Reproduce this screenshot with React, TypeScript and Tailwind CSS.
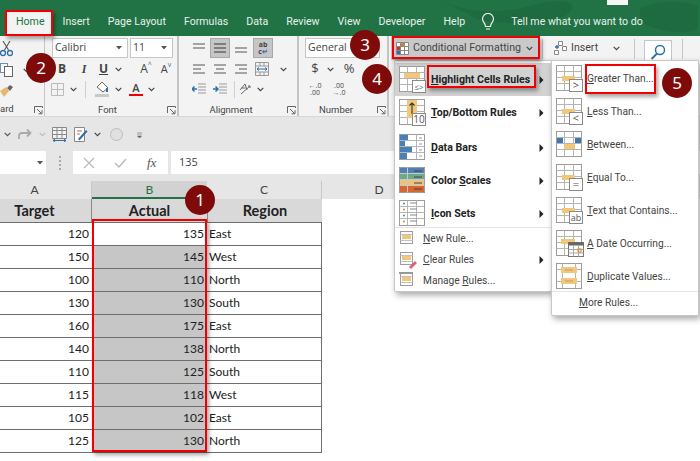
import React from "react";

const Caret = ({ c = "#444" }: { c?: string }) => (
  <svg width="7" height="5" viewBox="0 0 7 5"><path d="M0.7 0.8 3.5 3.6 6.3 0.8" fill="none" stroke={c} strokeWidth="1.2" /></svg>
);
const DropTri = () => <svg width="6" height="4" viewBox="0 0 6 4"><path d="M0 0h6L3 3.5z" fill="#555" /></svg>;
const RightTri = () => <svg width="5" height="8" viewBox="0 0 5 8"><path d="M0.5 0 4.5 4 0.5 8z" fill="#222" /></svg>;
const Launcher = () => (
  <svg width="9" height="9" viewBox="0 0 9 9"><path d="M0.5 7V0.5H8.5V2M3 3 7.5 7.5M4.5 7.8H8V4.2" fill="none" stroke="#666" strokeWidth="1" /></svg>
);
const Lines = ({ a, b, c, d = "#8a8a8a" }: { a: number[]; b: number[]; c: number[]; d?: string }) => (
  <svg width="14" height="10" viewBox="0 0 14 10">
    <path d={`M${a[0]} 1H${a[1]}M${b[0]} 5H${b[1]}M${c[0]} 9H${c[1]}`} stroke={d} strokeWidth="1.3" />
  </svg>
);
const Cell = ({ w, children, cls = "" }: { w: string; children?: React.ReactNode; cls?: string }) => (
  <div className={`flex items-center justify-center h-[20px] ${w} ${cls}`}>{children}</div>
);

function Base({ children, lines = true }: { children?: React.ReactNode; lines?: boolean }) {
  return (
    <svg width="28" height="27" viewBox="0 0 28 27" className="shrink-0">
      <rect x="0.5" y="0.5" width="25" height="25" fill="#fff" stroke="#9c9c9c" />
      {lines && <path d="M8.5 0.5V25.5M17.5 0.5V25.5M0.5 6.5H25.5M0.5 12.5H25.5M0.5 18.5H25.5" stroke="#b5b5b5" />}
      {children}
    </svg>
  );
}
const Badge = ({ t, size = 10 }: { t: string; size?: number }) => (
  <g>
    <rect x="13.5" y="14.5" width="13" height="12" fill="#fff" stroke="#8a8a8a" />
    <text x="20" y="24" fontSize={size} textAnchor="middle" fill="#555" fontFamily="Open Sans">{t}</text>
  </g>
);
const Amber = ({ y = 9, x = 6, w = 14 }: { y?: number; x?: number; w?: number }) => <rect x={x} y={y} width={w} height="5" fill="#f2c878" />;

const IconHighlight = () => <Base><rect x="1" y="7" width="24" height="5" fill="#fff" /><Amber y={7} x={5} w={16} /><Badge t="≤>" size={8} /></Base>;
const IconTop = () => (
  <Base>
    <rect x="8" y="1" width="10" height="18" fill="#f2c878" />
    <path d="M13 15V4M10.5 6.5 13 4l2.5 2.5" fill="none" stroke="#333" strokeWidth="1.1" />
    <Badge t="10" />
  </Base>
);
const IconBars = () => (
  <Base lines={false}>
    <path d="M17.5 0.5V25.5M0.5 6.5H25.5M0.5 12.5H25.5M0.5 18.5H25.5" stroke="#b5b5b5" />
    <path d="M1 1h8v5H1zM1 7h5v5H1zM1 13h12v5H1zM1 19h7v6H1z" fill="#4a7fb8" />
    <path d="M20 4h3M20 10h3M20 16h3M20 22h3" stroke="#999" />
  </Base>
);
const IconScales = () => (
  <Base lines={false}>
    <rect x="1" y="1" width="24" height="6" fill="#4f81b5" />
    <rect x="1" y="7" width="24" height="6" fill="#6fa98c" />
    <rect x="1" y="13" width="24" height="6" fill="#eec27a" />
    <rect x="1" y="19" width="24" height="6" fill="#d9662f" />
    <path d="M8.5 0.5V25.5M0.5 6.5H25.5M0.5 12.5H25.5M0.5 18.5H25.5" stroke="#c8c8c8" />
    <path d="M15 4h8M15 10h8M15 16h8M15 22h8" stroke="#444" />
  </Base>
);
const IconSets = () => (
  <Base>
    <path d="M11 3h7M11 9h7M11 15h7M11 21h7" stroke="#888" />
    <circle cx="5" cy="3.5" r="1" fill="#3a9a7a" /><circle cx="5" cy="9.5" r="1" fill="#e08020" />
    <circle cx="5" cy="15.5" r="1" fill="#3a9a7a" /><circle cx="5" cy="21.5" r="1" fill="#e08020" />
  </Base>
);
const SmallBase = ({ children }: { children?: React.ReactNode }) => (
  <svg width="18" height="18" viewBox="0 0 18 18" className="shrink-0">
    <rect x="1.5" y="1.5" width="12" height="12" fill="#fff" stroke="#9c9c9c" />
    <path d="M1.5 4.5H13.5M1.5 10.5H13.5" stroke="#c0c0c0" />
    <rect x="3" y="5" width="9" height="4" fill="#f2c878" />
    {children}
  </svg>
);
const Sub = ({ kind }: { kind: string }) => {
  if (kind === "between") return (
    <Base lines={false}>
      <path d="M8.5 0.5V25.5M17.5 0.5V25.5M0.5 6.5H25.5M0.5 12.5H25.5M0.5 18.5H25.5" stroke="#b5b5b5" />
      <rect x="1" y="7" width="6" height="5" fill="#3f79b0" /><rect x="19" y="7" width="6" height="5" fill="#3f79b0" />
      <Amber y={13} x={8} w={11} />
    </Base>
  );
  if (kind === "dup") return (
    <Base lines={false}>
      <path d="M0.5 6.5H25.5M0.5 18.5H25.5M6.5 0.5V25.5M19.5 0.5V25.5" stroke="#b5b5b5" />
      <rect x="5" y="4" width="16" height="6" fill="#f2c878" /><rect x="5" y="15" width="16" height="6" fill="#f2c878" />
      <path d="M9 7h8M9 18h8" stroke="#b98" />
    </Base>
  );
  if (kind === "date") return (
    <Base>
      <Amber y={9} x={5} w={14} />
      <rect x="12.5" y="12.5" width="15" height="14" fill="#fff" stroke="#777" />
      <rect x="12.5" y="12.5" width="15" height="3" fill="#666" />
      <path d="M17.5 15.5V26.5M22.5 15.5V26.5M12.5 19.5H27.5M12.5 23H27.5" stroke="#aaa" />
      <rect x="22" y="19" width="3" height="3" fill="none" stroke="#e08020" />
    </Base>
  );
  const t = kind === "gt" ? ">" : kind === "lt" ? "<" : kind === "eq" ? "=" : "ab";
  return <Base><Amber y={11} x={6} w={13} /><Badge t={t} size={kind === "ab" ? 9 : 11} /></Base>;
};

const Item = ({ icon, children, tri, h = "h-[33px]", cls = "" }: { icon: React.ReactNode; children: React.ReactNode; tri?: boolean; h?: string; cls?: string }) => (
  <div className={`flex items-center pl-[4px] ${h} ${cls}`}>
    <div className="w-[32px] flex shrink-0">{icon}</div>
    <span className="text-[10.6px] font-bold text-[#222] whitespace-nowrap font-['Roboto',sans-serif]">{children}</span>
    {tri && <span className="ml-auto mr-[7px] flex"><RightTri /></span>}
  </div>
);
const Small = ({ icon, children, tri }: { icon: React.ReactNode; children: React.ReactNode; tri?: boolean }) => (
  <div className="flex items-center h-[21px] pl-[4px]">
    <div className="w-[24px] flex shrink-0">{icon}</div>
    <span className="text-[10.2px] text-[#444] whitespace-nowrap font-['Roboto',sans-serif]">{children}</span>
    {tri && <span className="ml-auto mr-[7px] flex"><RightTri /></span>}
  </div>
);
const SubItem = ({ kind, children }: { kind: string; children: React.ReactNode }) => (
  <div className="flex items-center h-[33px] pl-[4px]">
    <div className="w-[31px] flex shrink-0"><Sub kind={kind} /></div>
    <span className="text-[10.2px] text-[#444] whitespace-nowrap font-['Roboto',sans-serif]">{children}</span>
  </div>
);
const Dot = ({ cls, t }: { cls: string; t: string }) => (
  <div className={`absolute w-[30px] h-[30px] rounded-full bg-[#7f0a0a] text-white flex items-center justify-center text-[17px] font-['Noto_Sans',sans-serif] ${cls}`}>{t}</div>
);
const RedBox = ({ cls }: { cls: string }) => (
  <div className={`absolute border-[2px] border-[#f00000] shadow-[2px_3px_4px_rgba(0,0,0,0.35)] ${cls}`} />
);

const rows: [number, number, string][] = [
  [120, 135, "East"], [150, 145, "West"], [100, 110, "North"], [130, 130, "South"], [160, 175, "East"],
  [140, 138, "North"], [110, 125, "South"], [115, 118, "West"], [105, 102, "East"], [125, 130, "North"],
];
const tabs = ["Insert", "Page Layout", "Formulas", "Data", "Review", "View", "Developer", "Help"];

export default function App() {
  return (
    <div className="relative w-[700px] h-[461px] overflow-hidden bg-white font-['Open_Sans',sans-serif] text-[#444]">
      {/* title + tabs */}
      <div className="relative h-[36px] bg-[#217346] overflow-hidden">
        <svg className="absolute left-0 top-0" width="700" height="36" viewBox="0 0 700 36">
          <path d="M440 0c30 14 60 14 90 6s50-6 40 6-60 14-90 8M640 8c20-8 40-8 58-2v24c-20 6-44 0-58-8z" fill="#1e6b41" />
          <rect x="607" y="0" width="21" height="5" fill="#f5f5f5" />
        </svg>
        <div className="absolute left-[6px] top-[10px] w-[47px] h-[26px] bg-[#f3f3f3]" />
        <div className="relative flex items-center h-[28px] mt-[8px] pl-[16px] gap-[18px] text-[10.6px] text-[#e8f1ec] whitespace-nowrap font-['Roboto',sans-serif]">
          <span className="text-[#217346]">Home</span>
          {tabs.map((t) => <span key={t}>{t}</span>)}
          <span className="ml-[-2px] flex items-center gap-[16px]">
            <svg width="14" height="18" viewBox="0 0 14 18"><path d="M4.5 13.5C4.5 10 1.5 9 1.5 6a5.5 5.5 0 0 1 11 0c0 3-3 4-3 7.500zM5 16h4" fill="none" stroke="#eef5f0" strokeWidth="1.2" /></svg>
            <span>Tell me what you want to do</span>
          </span>
        </div>
      </div>

      {/* ribbon */}
      <div className="flex h-[81px] bg-[#f3f3f3] border-b border-[#d8d8d8] text-[#444]">
        {/* clipboard */}
        <div className="relative w-[45px] shrink-0 border-r border-[#c4c4c4] flex flex-col pt-[3px]">
          <div className="flex flex-col gap-[1px]">
            <Cell w="w-[13px]">
              <svg width="13" height="16" viewBox="0 0 13 16"><path d="M3 0 8.500 9M10 0 4.500 9" stroke="#555" strokeWidth="1.1" /><circle cx="3" cy="12" r="2.500" fill="none" stroke="#2f6ea8" strokeWidth="1.3" /><circle cx="10" cy="12" r="2.500" fill="none" stroke="#2f6ea8" strokeWidth="1.3" /></svg>
            </Cell>
            <div className="flex items-center">
              <Cell w="w-[13px]">
                <svg width="13" height="14" viewBox="0 0 13 14"><rect x="0.500" y="0.500" width="7" height="9" fill="#fff" stroke="#6a8fb5" /><rect x="4.500" y="3.500" width="8" height="10" fill="#fff" stroke="#666" /></svg>
              </Cell>
              <Cell w="w-[7px]" cls="ml-[10px]"><Caret /></Cell>
            </div>
            <Cell w="w-[13px]">
              <svg width="13" height="12" viewBox="0 0 13 12"><path d="M0 6 6 2l3 4-5 6z" fill="#e9b66e" /><path d="M7 3l3-3 3 2-3 4z" fill="#666" /></svg>
            </Cell>
          </div>
          <div className="absolute left-0 top-[66px] text-[9.5px] font-['Roboto',sans-serif] text-[#444]">ard</div>
          <div className="absolute left-[34px] top-[70px]"><Launcher /></div>
        </div>
        {/* font */}
        <div className="relative w-[134px] shrink-0 border-r-[2px] border-[#c4c4c4] pl-[7px] pt-[2px] flex flex-col">
          <div className="flex gap-[2px]">
            <div className="w-[76px] h-[20px] border border-[#c6c6c6] bg-white flex items-center justify-between pl-[2px] pr-[5px] text-[10.5px]"><span>Calibri</span><DropTri /></div>
            <div className="w-[43px] h-[20px] border border-[#c6c6c6] bg-white flex items-center justify-between pl-[2px] pr-[5px] text-[10.5px]"><span>11</span><DropTri /></div>
          </div>
          <div className="flex items-center mt-[1px] h-[20px] text-[12px] text-[#444] pl-[3px]">
            <Cell w="w-[14px]"><b className="font-bold">B</b></Cell>
            <Cell w="w-[8px]" />
            <Cell w="w-[14px]"><i className="font-['Liberation_Serif',serif] font-bold">I</i></Cell>
            <Cell w="w-[6px]" />
            <Cell w="w-[13px]"><b className="underline">U</b></Cell>
            <Cell w="w-[16px]"><Caret /></Cell>
            <Cell w="w-[13px]" />
            <Cell w="w-[14px]"><span className="text-[12px]">A</span><span className="text-[#2f6ea8] text-[7px] mb-[8px]">^</span></Cell>
            <Cell w="w-[6px]" />
            <Cell w="w-[14px]"><span className="text-[11px]">A</span><span className="text-[#2f6ea8] text-[7px] mb-[8px]">v</span></Cell>
          </div>
          <div className="flex items-center h-[20px]">
            <Cell w="w-[13px]" cls="ml-[-1px]">
              <svg width="13" height="13" viewBox="0 0 13 13"><path d="M0.500 0.500H12.500V12.500H0.500zM6.500 0.500V12.500M0.500 6.500H12.500" fill="none" stroke="#bbb" /></svg>
            </Cell>
            <Cell w="w-[19px]"><Caret /></Cell>
            <div className="w-px h-[17px] bg-[#d0d0d0] ml-[2px]" />
            <Cell w="w-[20px]" cls="ml-[6px]">
              <svg width="14" height="16" viewBox="0 0 14 16"><path d="M7 1 13 7l-5 4-6-5z" fill="#fff" stroke="#666" /><path d="M12 7v4" stroke="#2f6ea8" strokeWidth="2" /><rect x="0" y="13" width="14" height="3" fill="#c8c8c8" /></svg>
            </Cell>
            <Cell w="w-[9px]" cls="ml-[2px]"><Caret /></Cell>
            <Cell w="w-[12px]" cls="ml-[7px] flex-col">
              <span className="text-[11px] leading-[12px] font-semibold">A</span>
              <span className="w-[14px] h-[2px] bg-[#f00000] shrink-0" />
            </Cell>
            <Cell w="w-[9px]" cls="ml-[5px]"><Caret /></Cell>
          </div>
          <div className="absolute left-0 right-0 top-[67px] text-center text-[9.5px] pr-[14px] pl-[7px] font-['Roboto',sans-serif]">Font</div>
          <div className="absolute right-[1px] top-[70px]"><Launcher /></div>
        </div>
        {/* alignment */}
        <div className="relative w-[120px] shrink-0 border-r-[2px] border-[#c4c4c4] pl-[10px] pt-[2px] flex flex-col">
          <div className="flex items-center h-[20px] gap-[1px]">
            <Cell w="w-[20px]"><Lines a={[1, 13]} b={[1, 13]} c={[20, 20]} /></Cell>
            <Cell w="w-[20px]" cls="bg-[#c6c6c6] border border-[#a8a8a8]"><Lines a={[1, 13]} b={[1, 13]} c={[1, 13]} d="#666" /></Cell>
            <Cell w="w-[20px]"><Lines a={[20, 20]} b={[1, 13]} c={[1, 13]} /></Cell>
            <Cell w="w-[20px]" cls="ml-[1px] bg-[#c6c6c6] border border-[#a8a8a8] text-[7px] leading-[7px] font-bold flex-col"><span>ab</span><span>c<span className="text-[#2f6ea8]">↵</span></span></Cell>
          </div>
          <div className="flex items-center h-[20px] gap-[1px] mt-[1px]">
            <Cell w="w-[20px]"><Lines a={[1, 13]} b={[1, 9]} c={[1, 13]} /></Cell>
            <Cell w="w-[20px]"><Lines a={[1, 13]} b={[3, 11]} c={[1, 13]} /></Cell>
            <Cell w="w-[20px]"><Lines a={[1, 13]} b={[5, 13]} c={[1, 13]} /></Cell>
            <Cell w="w-[20px]">
              <svg width="14" height="14" viewBox="0 0 14 14"><path d="M0.500 0.500H13.500V13.500H0.500zM0.500 4H13.500M0.500 10H13.500M5 0.500V4M9 0.500V4M5 10V13.500M9 10V13.500" fill="none" stroke="#999" /><path d="M2 7H12M4 5.500 2 7l2 1.500M10 5.500 12 7l-2 1.500" fill="none" stroke="#2f6ea8" /></svg>
            </Cell>
            <Cell w="w-[20px]"><Caret /></Cell>
          </div>
          <div className="flex items-center h-[20px] gap-[1px]">
            <Cell w="w-[20px]">
              <svg width="14" height="12" viewBox="0 0 14 12"><path d="M6 1H14M6 4H14M6 7H14M6 10H14" stroke="#999" /><path d="M5 6H0M2.500 3.500 0 6l2.500 2.500" fill="none" stroke="#2f6ea8" strokeWidth="1.500" /></svg>
            </Cell>
            <Cell w="w-[20px]">
              <svg width="14" height="12" viewBox="0 0 14 12"><path d="M6 1H14M6 4H14M6 7H14M6 10H14" stroke="#999" /><path d="M0 6H5M2.500 3.500 5 6 2.500 8.500" fill="none" stroke="#2f6ea8" strokeWidth="1.500" /></svg>
            </Cell>
            <div className="w-px h-[17px] bg-[#d0d0d0] ml-[3px]" />
            <Cell w="w-[16px]" cls="ml-[1px]">
              <svg width="14" height="14" viewBox="0 0 14 14"><path d="M2 8 7 2l2 6M3.500 6l4 0M3 12l9-8M10 4h2v2" fill="none" stroke="#666" /></svg>
            </Cell>
            <Cell w="w-[12px]"><Caret /></Cell>
          </div>
          <div className="absolute left-0 right-[14px] top-[67px] text-center text-[9.5px] font-['Roboto',sans-serif]">Alignment</div>
          <div className="absolute right-[1px] top-[70px]"><Launcher /></div>
        </div>
        {/* number */}
        <div className="relative w-[90px] shrink-0 border-r-[2px] border-[#c4c4c4] pl-[6px] pt-[2px] flex flex-col">
          <div className="w-[75px] h-[20px] border border-[#c6c6c6] bg-white flex items-center pl-[2px] text-[10.5px]">General</div>
          <div className="flex items-center h-[20px] mt-[1px] pl-[2px] text-[#444]">
            <Cell w="w-[16px]"><span className="text-[13px]">$</span></Cell>
            <Cell w="w-[15px]"><Caret /></Cell>
            <Cell w="w-[22px]"><span className="text-[13px]">%</span></Cell>
          </div>
          <div className="flex items-center h-[20px] pl-[3px] text-[7px] leading-[7px] gap-[10px]">
            <Cell w="w-[14px]" cls="flex-col"><span><span className="text-[#2f6ea8]">←</span>.0</span><span>.00</span></Cell>
            <Cell w="w-[14px]" cls="flex-col"><span>.00</span><span><span className="text-[#2f6ea8]">→</span>.0</span></Cell>
          </div>
          <div className="absolute left-0 right-[14px] top-[67px] text-center text-[9.5px] font-['Roboto',sans-serif]">Number</div>
          <div className="absolute right-[1px] top-[70px]"><Launcher /></div>
        </div>
        {/* styles / cells / editing */}
        <div className="w-[2px] shrink-0" />
        <div className="w-[148px] shrink-0 h-[24px] bg-[#c9c9c9] flex items-center pl-[5px] text-[10.6px] whitespace-nowrap gap-[3px] font-['Roboto',sans-serif]">
          <svg width="13" height="13" viewBox="0 0 13 13" className="shrink-0"><path d="M0.500 0.500H12.500V12.500H0.500zM4.500 0.500V12.500M8.500 0.500V12.500M0.500 4.500H12.500M0.500 8.500H12.500" fill="#fff" stroke="#888" /><rect x="5" y="1" width="3" height="3" fill="#e08020" /><rect x="1" y="5" width="3" height="3" fill="#d03030" /><rect x="1" y="9" width="3" height="3" fill="#2f6ea8" /></svg>
          <span className="ml-[1px]">Conditional Formatting</span>
          <span className="ml-[2px] flex"><Caret /></span>
        </div>
        <div className="w-px h-[20px] mt-[3px] ml-[3px] bg-[#c4c4c4] shrink-0" />
        <div className="flex items-center h-[24px] pl-[11px] text-[10.6px] w-[91px] shrink-0 font-['Roboto',sans-serif]">
          <svg width="13" height="14" viewBox="0 0 13 14" className="shrink-0"><path d="M4.500 0.500H8.500V4.500H4.500zM8.500 5.500H12.500V9.500H8.500zM0.500 9.500H4.500V13.500H0.500z" fill="#fff" stroke="#888" /><path d="M1 6H5M3 4V8" stroke="#2f6ea8" strokeWidth="1.300" /></svg>
          <span className="ml-[4px]">Insert</span>
          <span className="ml-[15px] flex"><Caret /></span>
        </div>
        <div className="w-px h-[20px] mt-[3px] bg-[#c4c4c4] shrink-0" />
        <div className="w-[28px] h-[22px] mt-[4px] ml-[9px] border border-[#c6c6c6] border-b-0 bg-white flex items-center justify-center shrink-0">
          <svg width="16" height="16" viewBox="0 0 16 16"><circle cx="10" cy="6" r="4.500" fill="none" stroke="#2f6ea8" strokeWidth="1.500" /><path d="M7 9.500 1.500 15" stroke="#2f6ea8" strokeWidth="1.800" /></svg>
        </div>
        <div className="w-px h-[20px] mt-[3px] ml-[10px] bg-[#c4c4c4] shrink-0" />
      </div>

      {/* qat + formula */}
      <div className="h-[64px] bg-[#e6e6e6] flex flex-col">
        <div className="flex items-center h-[35px] text-[#777]">
          <Cell w="w-[14px]"><Caret c="#555" /></Cell>
          <Cell w="w-[16px]" cls="ml-[3px]"><svg width="14" height="12" viewBox="0 0 14 12"><path d="M1 10V7a3 3 0 0 1 3-3h8M9 0.500 12.500 4 9 7.500" fill="none" stroke="#aaa" strokeWidth="1.800" /></svg></Cell>
          <Cell w="w-[12px]" cls="ml-[3px]"><Caret c="#bbb" /></Cell>
          <Cell w="w-[15px]" cls="ml-[4px]"><svg width="15" height="15" viewBox="0 0 15 15"><path d="M0.500 0.500H14.500V11.500H0.500zM0.500 3.500H14.500M5 0.500V11.500M10 0.500V11.500M0.500 7.500H14.500" fill="#f4f4f4" stroke="#888" /><path d="M1 13.500H14M3 12 1 13.500 3 15M12 12l2 1.500-2 1.500" fill="none" stroke="#2f6ea8" /></svg></Cell>
          <Cell w="w-[14px]" cls="ml-[7px]"><svg width="14" height="15" viewBox="0 0 14 15"><path d="M0.500 0.500H10.500V14.500H0.500z" fill="#fff" stroke="#888" /><path d="M3 4H8M3 7H6" stroke="#d06040" /><path d="M4 12 12 3l1.500 1.500-8 9z" fill="#2f6ea8" /></svg></Cell>
          <Cell w="w-[10px]" cls="ml-[4px]"><Caret /></Cell>
          <Cell w="w-[14px]" cls="ml-[7px]"><span className="block w-[13px] h-[13px] rounded-full border border-[#bdbdbd] bg-[#e0e0e0]" /></Cell>
          <Cell w="w-[6px]" cls="ml-[13px]"><svg width="5" height="6" viewBox="0 0 5 6"><path d="M0 0h5M0 2h5M0.500 4h4L2.500 6z" fill="#666" stroke="#666" strokeWidth="0.600" /></svg></Cell>
        </div>
        <div className="flex h-[23px] mt-[-1px]">
          <div className="w-[46px] bg-white flex items-center justify-end pr-[3px]"><DropTri /></div>
          <div className="w-[27px] flex items-center justify-center"><span className="flex flex-col gap-[2px]"><span className="w-[2px] h-[2px] bg-[#aaa]" /><span className="w-[2px] h-[2px] bg-[#aaa]" /><span className="w-[2px] h-[2px] bg-[#aaa]" /><span className="w-[2px] h-[2px] bg-[#aaa]" /></span></div>
          <div className="w-[95px] bg-white flex items-center pl-[10px]">
            <svg width="12" height="12" viewBox="0 0 12 12"><path d="M1 1 11 11M11 1 1 11" stroke="#bbb" strokeWidth="1.300" /></svg>
            <svg width="13" height="12" viewBox="0 0 13 12" className="ml-[19px]"><path d="M1 6 5 10 12 2" fill="none" stroke="#bbb" strokeWidth="1.500" /></svg>
            <i className="ml-[20px] font-['Liberation_Serif',serif] text-[13px] text-[#555]">fx</i>
          </div>
          <div className="ml-[3px] flex-1 bg-white flex items-center pl-[8px] text-[11px]">135</div>
        </div>
        <div className="flex-1" />
      </div>

      {/* sheet */}
      <div className="font-['Lato',sans-serif] text-[#222]">
        <div className="flex h-[18px] bg-[#e6e6e6] text-[12px] text-[#444] leading-[18px]">
          <div className="w-[92px] text-center pr-[22px] border-r border-[#c8c8c8]">A</div>
          <div className="w-[115px] text-center bg-[#d2d2d2] border-b-[2px] border-[#217346] text-[#217346]">B</div>
          <div className="w-[115px] text-center border-r border-[#c8c8c8]">C</div>
          <div className="w-[114px] text-center">D</div>
          <div className="flex-1" />
        </div>
        <div className="flex h-[23px] text-[14.5px] font-bold leading-[23px] text-[#222]">
          <div className="w-[92px] bg-[#d9d9d9] text-center pr-[22px] border-r border-[#8a8a8a]">Target</div>
          <div className="w-[115px] bg-[#d9d9d9] text-center">Actual</div>
          <div className="w-[115px] bg-[#d9d9d9] text-center border-l border-[#8a8a8a]">Region</div>
        </div>
        {rows.map(([a, b, r], i) => (
          <div key={i} className="flex h-[23px] text-[12px] leading-[22px] w-[322px]">
            <div className="w-[92px] text-right pr-[3px] bg-white border-t border-b border-[#6e6e6e] mb-[-1px]">{a}</div>
            <div className={`w-[115px] text-right pr-[3px] border-t border-b border-[#6e6e6e] mb-[-1px] ${i === 0 ? "bg-white" : "bg-[#c6c6c6]"}`}>{b}</div>
            <div className="w-[115px] pl-[2px] bg-white border border-[#6e6e6e] border-l-0 mb-[-1px]">{r}</div>
          </div>
        ))}
      </div>

      {/* menu 1 */}
      <div className="absolute left-[394px] top-[60px] w-[158px] h-[232px] bg-white border border-[#c8c8c8] rounded-b-[2px] shadow-[2px_3px_6px_rgba(0,0,0,0.35)] pt-[2px]">
        <Item icon={<IconHighlight />} tri cls="bg-[#d2d2d2]"><u>H</u>ighlight Cells Rules</Item>
        <Item icon={<IconTop />} tri><u>T</u>op/Bottom Rules</Item>
        <Item icon={<IconBars />} tri cls="mt-[2px]"><u>D</u>ata Bars</Item>
        <Item icon={<IconScales />} tri>Color <u>S</u>cales</Item>
        <Item icon={<IconSets />} tri><u>I</u>con Sets</Item>
        <div className="border-t border-[#e4e4e4] mt-[-3px]">
          <Small icon={<SmallBase />}><u>N</u>ew Rule...</Small>
          <Small tri icon={<SmallBase><path d="M10 16 16 10l2 2-6 6z" fill="#e0607a" /></SmallBase>}><u>C</u>lear Rules</Small>
          <Small icon={<SmallBase><rect x="0" y="0" width="14" height="2" fill="#999" /></SmallBase>}>Manage <u>R</u>ules...</Small>
        </div>
      </div>

      {/* menu 2 */}
      <div className="absolute left-[551px] top-[60px] w-[148px] h-[256px] bg-white border border-[#c8c8c8] rounded-b-[2px] shadow-[2px_3px_6px_rgba(0,0,0,0.35)] pt-[1px]">
        <SubItem kind="gt"><u>G</u>reater Than...</SubItem>
        <SubItem kind="lt"><u>L</u>ess Than...</SubItem>
        <SubItem kind="between"><u>B</u>etween...</SubItem>
        <SubItem kind="eq"><u>E</u>qual To...</SubItem>
        <SubItem kind="ab"><u>T</u>ext that Contains...</SubItem>
        <SubItem kind="date"><u>A</u> Date Occurring...</SubItem>
        <SubItem kind="dup"><u>D</u>uplicate Values...</SubItem>
        <div className="border-t border-[#e4e4e4] h-[22px] flex items-center pl-[27px] text-[10.2px] text-[#444] mt-[-2px] font-['Roboto',sans-serif]"><span><u>M</u>ore Rules...</span></div>
      </div>

      {/* annotations */}
      <RedBox cls="left-[5px] top-[10px] w-[48px] h-[26px]" />
      <RedBox cls="left-[392px] top-[36px] w-[148px] h-[23px]" />
      <RedBox cls="left-[427px] top-[65px] w-[109px] h-[23px]" />
      <RedBox cls="left-[585px] top-[64px] w-[71px] h-[30px]" />
      <RedBox cls="left-[92px] top-[219px] w-[115px] h-[233px]" />
      <Dot cls="left-[185px] top-[185px]" t="1" />
      <Dot cls="left-[26px] top-[53px]" t="2" />
      <Dot cls="left-[350px] top-[30px]" t="3" />
      <Dot cls="left-[362px] top-[64px]" t="4" />
      <Dot cls="left-[662px] top-[68px]" t="5" />
    </div>
  );
}
